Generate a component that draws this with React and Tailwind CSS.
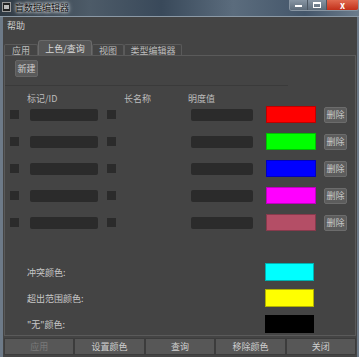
const font = { fontFamily: '"Noto Sans CJK SC", "Noto Sans", sans-serif' };

const rows = [
    { color: 'bg-[#ff0000]' },
    { color: 'bg-[#00ff00]' },
    { color: 'bg-[#0000ff]' },
    { color: 'bg-[#ff00ff]' },
    { color: 'bg-[#b44e66]' },
];

const specials = [
    { label: '冲突颜色:', color: 'bg-[#00ffff]' },
    { label: '超出范围颜色:', color: 'bg-[#ffff00]' },
    { label: '"无"颜色:', color: 'bg-[#000000]' },
];

const footer = [
    { label: '应用', disabled: true },
    { label: '设置颜色' },
    { label: '查询' },
    { label: '移除颜色' },
    { label: '关闭' },
];

function TitleBar() {
    return (
        <div className="h-[17px] flex items-start bg-[linear-gradient(90deg,#303a44,#4d5b68_25%,#39495a_45%,#5b6c7d_65%,#44566a_85%,#6c7c8c)] border-b border-[#8b99a6]">
            <div className="mt-[2px] ml-[2px] w-[9px] h-[10px] bg-[#222] border border-[#999] flex items-center justify-center">
                <div className="w-[5px] h-[4px] bg-[#bbb]" />
            </div>
            <span className="ml-[4px] mt-[1px] text-[9px] leading-[13px] text-[#111] [text-shadow:0_0_3px_#fff,0_0_5px_#fff]">
                盲数据编辑器
            </span>
            <div className="ml-auto flex h-[11px] border border-t-0 border-[#8895a2] rounded-b-[3px] overflow-hidden">
                <div className="w-[18px] h-full bg-[linear-gradient(180deg,#8795a3,#5d6b79)] flex items-center justify-center border-r border-[#4c5762]">
                    <div className="w-[7px] h-[2px] bg-white mt-[2px]" />
                </div>
                <div className="w-[19px] h-full bg-[linear-gradient(180deg,#8795a3,#5d6b79)] flex items-center justify-center border-r border-[#4c5762]">
                    <div className="w-[8px] h-[6px] border border-white border-t-2" />
                </div>
                <div className="w-[31px] h-full bg-[linear-gradient(180deg,#e06a50,#c2301a)] flex items-center justify-center text-white text-[9px] leading-none font-bold">
                    x
                </div>
            </div>
        </div>
    );
}

function Tabs() {
    return (
        <div className="flex items-end h-[15px] mt-[5px] ml-[1px] text-[9px] leading-[11px]">
            <div className="w-[34px] h-[11px] border border-b-0 border-[#5a5a5a] rounded-t-[2px] text-[#bdbdbd] text-center">应用</div>
            <div className="w-[54px] h-[15px] pt-[2px] bg-[#565656] border border-b-0 border-[#6a6a6a] rounded-t-[3px] text-[#d8d8d8] text-center">上色/查询</div>
            <div className="w-[32px] h-[11px] border border-b-0 border-[#5a5a5a] rounded-t-[2px] text-[#bdbdbd] text-center">视图</div>
            <div className="w-[58px] h-[11px] border border-b-0 border-[#5a5a5a] rounded-t-[2px] text-[#bdbdbd] text-center">类型编辑器</div>
        </div>
    );
}

function Box({ className }) {
    return <div className={`bg-[#2b2b2b] rounded-[2px] ${className}`} />;
}

function Row({ color }) {
    return (
        <div className="flex items-center h-[17px]">
            <Box className="ml-[5px] w-[9px] h-[9px] rounded-none" />
            <Box className="ml-[11px] w-[68px] h-[12px]" />
            <Box className="ml-[9px] w-[9px] h-[9px] rounded-none" />
            <Box className="ml-[75px] w-[62px] h-[12px]" />
            <div className={`ml-[13px] w-[50px] h-[17px] border border-black/25 ${color}`} />
            <button className="ml-[8px] w-[23px] h-[16px] p-0 bg-[#5c5c5c] border border-[#6c6c6c] rounded-[2px] text-[9px] leading-none text-[#c8c8c8]">
                删除
            </button>
        </div>
    );
}

export default function App() {
    return (
        <div className="w-[359px] h-[357px] overflow-hidden flex flex-col bg-[#444444] text-[#c8c8c8]" style={font}>
            <TitleBar />
            <div className="flex-1 flex border-l-[3px] border-l-[#6d7a88] border-r-[2px] border-r-[#6d7a88]">
                <div className="flex-1 flex flex-col">
                    <div className="h-[18px] pl-[4px] text-[9px] leading-[18px] text-[#cfcfcf]">帮助</div>
                    <Tabs />
                    <div className="ml-[1px] mr-[1px] h-[281px] border border-[#5a5a5a] flex flex-col">
                        <button className="mt-[4px] ml-[10px] w-[23px] h-[17px] bg-[#5a5a5a] border border-[#666] rounded-[2px] text-[9px] leading-none text-[#cfcfcf]">
                            新建
                        </button>
                        <div className="mt-[8px] w-[283px] h-px bg-[#3a3a3a]" />
                        <div className="mt-[7px] h-[12px] flex text-[9px] leading-[12px] text-[#bdbdbd]">
                            <span className="ml-[22px] w-[97px]">标记/ID</span>
                            <span className="w-[64px]">长名称</span>
                            <span>明度值</span>
                        </div>
                        <div className="mt-[1px] flex flex-col gap-[10px]">
                            {rows.map((r, i) => (
                                <Row key={i} color={r.color} />
                            ))}
                        </div>
                        <div className="mt-[32px] flex flex-col gap-[8px]">
                            {specials.map((s) => (
                                <div key={s.label} className="flex items-center h-[18px]">
                                    <span className="ml-[22px] w-[238px] text-[9px] leading-none text-[#c8c8c8]">{s.label}</span>
                                    <div className={`w-[49px] h-[18px] border border-black/30 ${s.color}`} />
                                </div>
                            ))}
                        </div>
                    </div>
                    <div className="mt-[2px] mx-[1px] flex h-[17px]">
                        {footer.map((b) => (
                            <button
                                key={b.label}
                                className={`flex-1 bg-[#575757] border border-[#3c3c3c] text-[9px] leading-none ${b.disabled ? 'text-[#7a7a7a]' : 'text-[#cfcfcf]'}`}
                            >
                                {b.label}
                            </button>
                        ))}
                    </div>
                </div>
            </div>
        </div>
    );
}
